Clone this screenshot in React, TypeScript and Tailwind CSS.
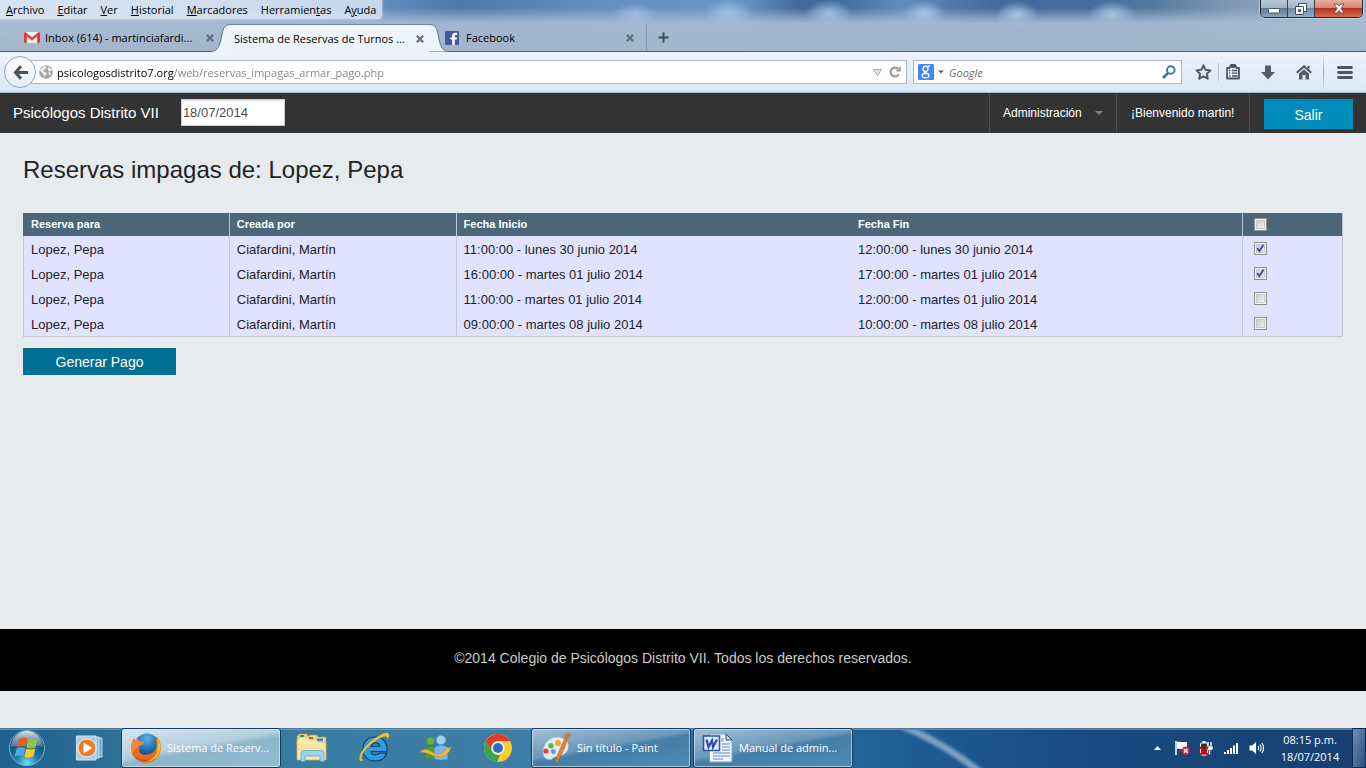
import { useState } from "react";
import type { ReactNode } from "react";

const reservations = [
  { id: 1, para: "Lopez, Pepa", por: "Ciafardini, Martín", inicio: "11:00:00 - lunes 30 junio 2014", fin: "12:00:00 - lunes 30 junio 2014", checked: true },
  { id: 2, para: "Lopez, Pepa", por: "Ciafardini, Martín", inicio: "16:00:00 - martes 01 julio 2014", fin: "17:00:00 - martes 01 julio 2014", checked: true },
  { id: 3, para: "Lopez, Pepa", por: "Ciafardini, Martín", inicio: "11:00:00 - martes 01 julio 2014", fin: "12:00:00 - martes 01 julio 2014", checked: false },
  { id: 4, para: "Lopez, Pepa", por: "Ciafardini, Martín", inicio: "09:00:00 - martes 08 julio 2014", fin: "10:00:00 - martes 08 julio 2014", checked: false },
];

const menus: [string, string, string][] = [
  ["", "A", "rchivo"],
  ["", "E", "ditar"],
  ["", "V", "er"],
  ["", "H", "istorial"],
  ["", "M", "arcadores"],
  ["Herramien", "t", "as"],
  ["A", "y", "uda"],
];

function CloseTab({ label }: { label: string }) {
  return (
    <button type="button" aria-label={label} className="shrink-0">
      <svg className="block h-2 w-2" viewBox="0 0 8 8" stroke="#5f7084" strokeWidth="2.2">
        <path d="M.8 .8 7.2 7.2M7.2 .8 .8 7.2" />
      </svg>
    </button>
  );
}

function WindowButtons() {
  return (
    <div className="mr-[3px] flex h-[18px] overflow-hidden rounded-b-[5px] border border-t-0 border-[#1e2b3c] shadow-[0_0_1px_1px_rgba(230,240,250,0.5)]">
      <button type="button" aria-label="Minimizar" className="flex w-[27px] items-center justify-center border-r border-[#31445c] bg-[linear-gradient(180deg,#b9c8d8_0%,#a3b5c8_45%,#5f7894_50%,#8ea3ba_100%)]">
        <svg className="mt-1 h-[6px] w-3" viewBox="0 0 12 6"><rect x=".5" y=".5" width="11" height="4.5" rx="1" fill="#fff" stroke="#45536a" /></svg>
      </button>
      <button type="button" aria-label="Restaurar" className="flex w-[27px] items-center justify-center border-r border-[#31445c] bg-[linear-gradient(180deg,#b9c8d8_0%,#a3b5c8_45%,#6f88a4_50%,#9aaec4_100%)]">
        <svg className="h-3 w-3" viewBox="0 0 12 12">
          <path d="M3.500 .5h8v8h-8z" fill="#fff" stroke="#45536a" />
          <path d="M.5 3.500h8v8h-8z" fill="#fff" stroke="#45536a" />
          <path d="M3.500 6.500h2v2h-2z" fill="#6f84a0" stroke="#45536a" />
        </svg>
      </button>
      <button type="button" aria-label="Cerrar" className="flex w-[47px] items-center justify-center bg-[linear-gradient(180deg,#e8aea2_0%,#d98373_45%,#b5321c_50%,#d9694a_100%)]">
        <svg className="h-[11px] w-3" viewBox="0 0 12 11">
          <path d="M1 1h3.200L6 3.200 7.800 1H11L8 5.400 11 10H7.800L6 7.600 4.200 10H1l3-4.600z" fill="#fff" stroke="#5a3a40" strokeWidth=".8" />
        </svg>
      </button>
    </div>
  );
}

function TitleArea() {
  return (
    <div className="bg-[linear-gradient(180deg,rgba(168,188,212,0)_8px,rgba(168,188,212,0.9)_23px,rgba(163,181,203,1)_51px),radial-gradient(22px_12px_at_635px_15px,#9fbce6,transparent),radial-gradient(24px_14px_at_728px_14px,#9cc4e6,transparent),radial-gradient(24px_14px_at_829px_14px,#9cc4e6,transparent),radial-gradient(22px_14px_at_924px_14px,#a5cbea,transparent),radial-gradient(22px_14px_at_1017px_15px,#a5cbe6,transparent),radial-gradient(24px_14px_at_1112px_15px,#a5cbe6,transparent),linear-gradient(90deg,#a9c6e8_0px,#93b2d6_210px,#5f8abb_390px,#4e78a8_460px,#6590bd_600px,#6a97c4_740px,#41699a_800px,#4671a1_850px,#5f8cba_900px,#44699a_1000px,#456e9d_1090px,#54799f_1150px,#8099b3_1230px,#9ab4d0_100%)]">
      <div className="flex h-5 items-start justify-between">
        <nav aria-label="Menú" className="flex h-[19px] items-center gap-[13px] rounded-br-[4px] bg-[#e0eaf5]/80 px-[6px] shadow-[0_0_3px_rgba(230,240,250,0.8)]">
          {menus.map(([before, key, after]) => (
            <button key={before + key + after} type="button" className="whitespace-nowrap">
              {before}
              <u>{key}</u>
              {after}
            </button>
          ))}
        </nav>
        <WindowButtons />
      </div>
      <div className="flex h-8 items-end border-b border-[#4b617b]">
        <div className="flex h-[27px] w-[198px] shrink-0 items-center pl-6">
          <svg className="h-[11px] w-4 shrink-0" viewBox="0 0 16 11">
            <rect width="16" height="11" rx="1" fill="#f4f0ee" />
            <path d="M0 1v9a1 1 0 0 0 1 1h1.800V4.200L8 8.400l5.200-4.200V11H15a1 1 0 0 0 1-1V1L14.800 0 8 5.500 1.200 0z" fill="#dc3a33" />
          </svg>
          <button type="button" className="ml-[5px] w-[161px] shrink-0 text-left whitespace-nowrap">Inbox (614) - martinciafardi...</button>
          <CloseTab label="Cerrar Inbox" />
        </div>
        <div className="-mb-px ml-[13px] flex h-[28px] shrink-0">
          <svg className="h-7 w-5" viewBox="0 0 20 28">
            <path d="M0 27.500C5 27.500 8 24 9.500 17L11.500 8C12.800 2.500 15 .5 20 .5V28H0z" fill="#eef4fb" />
            <path d="M0 27.500C5 27.500 8 24 9.500 17L11.500 8C12.800 2.500 15 .5 20 .5" fill="none" stroke="#5b7391" />
          </svg>
          <div className="flex w-[198px] items-center border-t border-[#6d86a4] bg-linear-to-b from-[#f3f7fc] to-[#eaf1fa]">
            <button type="button" className="w-[185px] pl-[3px] text-left whitespace-nowrap">Sistema de Reservas de Turnos ...</button>
            <CloseTab label="Cerrar Sistema de Reservas" />
          </div>
          <svg className="h-7 w-5" viewBox="0 0 20 28">
            <path d="M20 27.500C15 27.500 12 24 10.500 17L8.500 8C7.200 2.500 5 .5 0 .5V27.500z" fill="#eef4fb" transform="translate(0 0)" />
            <path d="M20 27.500C15 27.500 12 24 10.500 17L8.500 8C7.200 2.500 5 .5 0 .5" fill="none" stroke="#5b7391" />
          </svg>
        </div>
        <div className="-ml-1 flex h-[27px] w-[202px] shrink-0 items-center border-r border-[#8497ae]">
          <svg className="h-[14px] w-[14px]" viewBox="0 0 14 14">
            <rect width="14" height="14" rx="1" fill="#3f5a9d" />
            <path d="M7.200 14V8.600H5.400V6.400h1.800V5c0-2.100 1.200-3.200 3.100-3.200h1.900v2.200H11c-.9 0-1.200.4-1.200 1.200v1.200h2.300l-.3 2.200h-2V14z" fill="#fff" />
          </svg>
          <button type="button" className="ml-[7px] w-[160px] text-left">Facebook</button>
          <CloseTab label="Cerrar Facebook" />
        </div>
        <button type="button" aria-label="Nueva pestaña" className="mb-2 ml-[11px]">
          <svg className="block h-[11px] w-[11px]" viewBox="0 0 11 11" stroke="#3d4a59" strokeWidth="2"><path d="M5.500 .5v10M.5 5.500h10" /></svg>
        </button>
      </div>
    </div>
  );
}

function NavBar() {
  return (
    <div className="flex h-[41px] items-center border-b border-[#a5bdd4] bg-linear-to-b from-[#ecf3fb] to-[#dae8f6] pl-1">
      <button type="button" aria-label="Atrás" className="z-10 flex h-8 w-8 shrink-0 items-center justify-center rounded-full border border-[#8fa3ba] bg-linear-to-b from-white to-[#e3edf8]">
        <svg className="h-[15px] w-[15px]" viewBox="0 0 15 15" fill="none" stroke="#48525f" strokeWidth="3"><path d="M8 1.200 2.500 7.500 8 13.800M2.500 7.500H15" /></svg>
      </button>
      <div className="-ml-2 flex h-6 flex-1 items-center border border-[#a6bace] bg-white pr-[5px] pl-[10px]">
        <svg className="h-[14px] w-[14px] shrink-0" viewBox="0 0 14 14">
          <circle cx="7" cy="7" r="6.800" fill="#a3a3a3" />
          <path d="M4 1.500 6.500 1l1 1.500L6 4 4.500 5.500 5.500 7l2 .5L8 9l-2 1.500-.5 2L4 9 2 7 1 5zM9 2l3 1.500L13 6l-1.500-.5L10 7l2 1.500-1 2.500-1.500-2V6L8.500 4.500z" fill="#ededed" />
        </svg>
        <input aria-label="Dirección" defaultValue="psicologosdistrito7.org/web/reservas_impagas_armar_pago.php" className="ml-1 h-5 min-w-0 flex-1 bg-[linear-gradient(90deg,#000_117px,#838383_117px)] bg-clip-text text-transparent caret-black outline-none" />
        <button type="button" aria-label="Historial" className="mr-[7px]">
          <svg className="block h-[7px] w-[9px]" viewBox="0 0 9 7"><path d="M.5 .5h8l-4 6z" fill="#dde4ec" stroke="#9eabb9" /></svg>
        </button>
        <button type="button" aria-label="Recargar">
          <svg className="block h-3 w-3" viewBox="0 0 12 12"><path d="M9.800 8.200A4.400 4.400 0 1 1 8.800 2.600" fill="none" stroke="#929da9" strokeWidth="2.200" /><path d="M11.800 0v5.500H6.300z" fill="#929da9" /></svg>
        </button>
      </div>
      <div className="ml-[6px] flex h-6 w-[269px] items-center border border-[#a6bace] bg-white pr-[5px] pl-1">
        <button type="button" aria-label="Buscador" className="flex items-center gap-1">
          <svg className="h-4 w-4" viewBox="0 0 16 16">
            <rect width="16" height="16" rx="1.500" fill="#4285f4" />
            <g fill="none" stroke="#fff" strokeWidth="1.400"><ellipse cx="7.500" cy="4.800" rx="2.500" ry="2.600" /><path d="M9 2.400 11.800 2M7 7.400c-1.500 1.400.7 1.600 2 2.300" /><ellipse cx="7.600" cy="11.600" rx="3.400" ry="2.300" /></g>
          </svg>
          <svg className="h-1 w-[6px]" viewBox="0 0 6 4"><path d="M0 .5h6L3 3.500z" fill="#55606c" /></svg>
        </button>
        <input aria-label="Buscar" placeholder="Google" className="ml-[5px] h-5 min-w-0 flex-1 italic outline-none placeholder:text-[#6d6d6d]" />
        <button type="button" aria-label="Ir a buscar">
          <svg className="block h-[14px] w-[14px]" viewBox="0 0 14 14" fill="none" stroke="#3374ac"><circle cx="8.800" cy="5" r="3.800" strokeWidth="1.900" /><path d="M6 8 1 13" strokeWidth="2.600" /></svg>
        </button>
      </div>
      <button type="button" aria-label="Marcar página" className="ml-[13px]">
        <svg className="block h-4 w-[17px]" viewBox="0 0 17 16" fill="none" stroke="#4b5765" strokeWidth="1.900" strokeLinejoin="round"><path d="m8.500 1.300 2.100 4.500 4.900.6-3.600 3.400.9 4.900-4.300-2.400-4.300 2.400.9-4.900L1.500 6.400l4.900-.6z" /></svg>
      </button>
      <div className="ml-[6px] h-[18px] w-px bg-[#b3c5d8]" />
      <button type="button" aria-label="Marcadores" className="ml-[7px]">
        <svg className="block h-4 w-[14px]" viewBox="0 0 14 16"><path d="M1 4h2.500L5 1h4l1.500 3H13v10.500H1z" fill="none" stroke="#4b5765" strokeWidth="1.800" strokeLinejoin="round" /><path d="M4.500 4 5.500 1.500h3l1 2.500z" fill="#4b5765" /><path d="M3 6.500h1.500M6 6.500h5.500M3 9.200h1.500M6 9.200h5.500M3 12h1.500M6 12h5.500" stroke="#4b5765" strokeWidth="1.300" /></svg>
      </button>
      <button type="button" aria-label="Descargas" className="ml-[21px]">
        <svg className="block h-[15px] w-[14px]" viewBox="0 0 14 15"><path d="M4 .5h6V7h4l-7 7.500L0 7h4z" fill="#525e6c" /></svg>
      </button>
      <button type="button" aria-label="Inicio" className="ml-[21px]">
        <svg className="block h-[15px] w-4" viewBox="0 0 16 15"><path d="M.8 7.800 8 1.200l7.200 6.600" fill="none" stroke="#4b5765" strokeWidth="1.900" /><path d="M8 4.200 13 8.800V14.500H9.500V10h-3v4.500H3V8.800z" fill="#525e6c" /><path d="M11.500 1h2v3.500l-2-1.800z" fill="#4b5765" /></svg>
      </button>
      <div className="ml-[11px] h-9 w-px bg-linear-to-b from-transparent via-[#8fa3ba] to-transparent" />
      <button type="button" aria-label="Abrir menú" className="mr-[13px] ml-[13px]">
        <svg className="block h-[13px] w-4" viewBox="0 0 16 13" stroke="#4b5765" strokeWidth="2.800" strokeLinecap="round"><path d="M1.500 1.500h13M1.500 6.500h13M1.500 11.500h13" /></svg>
      </button>
    </div>
  );
}

function SiteHeader() {
  return (
    <header className="flex h-10 items-stretch bg-[#333333] text-[12px] text-white">
      <a href="#" className="ml-[13px] self-center text-[15px]">Psicólogos Distrito VII</a>
      <input aria-label="Fecha" defaultValue="18/07/2014" className="mt-[6px] ml-[22px] h-[27px] w-[104px] border border-[#cccccc] bg-white px-px text-[13px] text-[#4d4d4d] shadow-[inset_0_1px_2px_rgba(0,0,0,0.1)] outline-none" />
      <button type="button" className="ml-auto flex w-[127px] items-center justify-between border-l border-[#4d4d4d] pr-[13px] pl-[13px]">
        Administración
        <svg className="h-1 w-2" viewBox="0 0 8 4"><path d="M0 0h8L4 4z" fill="#848484" /></svg>
      </button>
      <span className="flex w-[133px] items-center border-l border-[#4d4d4d] pl-[14px]">¡Bienvenido martin!</span>
      <div className="border-l border-[#4d4d4d] pt-[6px] pr-[13px] pl-[14px]">
        <button type="button" className="block h-[30px] w-[89px] bg-[#008cba] pt-[2px] text-[14px]">Salir</button>
      </div>
    </header>
  );
}

function Tick({ label, checked, onChange }: { label: string; checked: boolean; onChange: () => void }) {
  return (
    <span className="grid w-[13px]">
      <input type="checkbox" aria-label={label} checked={checked} onChange={onChange} className="col-start-1 row-start-1 h-[13px] w-[13px] appearance-none border border-[#8e8f8f] bg-linear-to-br from-[#c3c6ce] to-[#f7f7f7] shadow-[inset_0_0_0_1px_#f4f4f4,inset_0_0_0_2px_#c5c8ce]" />
      {checked && (
        <svg className="pointer-events-none col-start-1 row-start-1 h-[13px] w-[13px]" viewBox="0 0 13 13" fill="none" stroke="#3f5798" strokeWidth="2"><path d="M3.300 6.200 5.400 9 9.500 2.800" /></svg>
      )}
    </span>
  );
}

function ReservationsPage() {
  const [checked, setChecked] = useState<boolean[]>(reservations.map((r) => r.checked));
  const all = checked.every(Boolean);
  return (
    <main className="flex-1 px-[23px] pt-[23px] text-[#222222]">
      <h1 className="text-[24px] leading-7">Reservas impagas de: Lopez, Pepa</h1>
      <table className="mt-[29px] w-full table-fixed border-separate border-spacing-0 border-r border-b border-[#bfc8d4] bg-[#e1e2ff] text-left text-[13px]">
        <colgroup>
          <col className="w-[15.6%]" />
          <col className="w-[17.2%]" />
          <col className="w-[29.9%]" />
          <col className="w-[29.7%]" />
          <col className="w-[7.6%]" />
        </colgroup>
        <thead>
          <tr className="h-[23px] bg-[#4c667a] text-[11px] text-white">
            <th className="border-l border-[#4c667a] px-[7px]">Reserva para</th>
            <th className="border-l border-[#bfc8d4] px-[7px]">Creada por</th>
            <th className="border-l border-[#bfc8d4] px-[7px]">Fecha Inicio</th>
            <th className="px-2">Fecha Fin</th>
            <th className="border-l border-[#bfc8d4] px-[11px]">
              <Tick label="Seleccionar todas" checked={all} onChange={() => setChecked(checked.map(() => !all))} />
            </th>
          </tr>
        </thead>
        <tbody>
          {reservations.map((r, i) => (
            <tr key={r.id} className="h-[25px]">
              <td className="border-l border-[#bfc8d4] px-[7px] pt-[2px]">{r.para}</td>
              <td className="border-l border-[#bfc8d4] px-[7px] pt-[2px]">{r.por}</td>
              <td className="border-l border-[#bfc8d4] px-[7px] pt-[2px]">{r.inicio}</td>
              <td className="px-2 pt-[2px]">{r.fin}</td>
              <td className="border-l border-[#bfc8d4] px-[11px]">
                <Tick label={`Seleccionar reserva ${r.id}`} checked={checked[i]} onChange={() => setChecked(checked.map((c, j) => (j === i ? !c : c)))} />
              </td>
            </tr>
          ))}
        </tbody>
      </table>
      <button type="button" className="mt-[11px] h-[27px] w-[153px] bg-[#007095] pt-[2px] text-[14px] text-white">Generar Pago</button>
    </main>
  );
}

function TaskButton({ label, active, children }: { label: string; active?: boolean; children: ReactNode }) {
  const look = active
    ? "bg-[linear-gradient(170deg,#d6e5ee_0%,#b3cfde_45%,#8db5ca_55%,#8fbdd2_100%)]"
    : "bg-[linear-gradient(170deg,#a3c0d6_0%,#6a98b9_45%,#447fa9_52%,#4d8ab0_100%)]";
  return (
    <button type="button" className={`flex h-10 w-40 shrink-0 items-center gap-[5px] rounded-[3px] border border-[#163c5c] pl-2 text-white shadow-[inset_0_0_0_1px_rgba(220,238,248,0.65)] ${look}`}>
      {children}
      <span className="whitespace-nowrap">{label}</span>
    </button>
  );
}

function Pinned({ label, children }: { label: string; children: ReactNode }) {
  return (
    <button type="button" aria-label={label} className="flex h-10 w-[62px] shrink-0 items-center justify-center">
      {children}
    </button>
  );
}

function StartOrb() {
  return (
    <svg className="h-[38px] w-[38px]" viewBox="0 0 38 38">
      <defs>
        <radialGradient id="orb" cx=".5" cy=".95" r=".8">
          <stop offset="0" stopColor="#6fe0f5" /><stop offset=".4" stopColor="#1f7fb0" /><stop offset="1" stopColor="#103a62" />
        </radialGradient>
        <linearGradient id="orbShine" x2="0" y2="1"><stop offset="0" stopColor="#d9e7f0" /><stop offset="1" stopColor="#7b9fba" stopOpacity=".5" /></linearGradient>
      </defs>
      <circle cx="19" cy="19" r="17.500" fill="url(#orb)" stroke="#7fb4cf" />
      <path d="M3 18a16 16 0 0 1 32 0c-8-2-22-2-32 0z" fill="url(#orbShine)" />
      <path d="M11 10c3-2 5.500-2 8.500-.6l-2 8.600c-3-1.400-5.400-1.400-8.600.3z" fill="#ee5a26" />
      <path d="M20.500 9.900c3 1.400 6 1.400 9.300-.3l-2.200 8.700c-3 1.600-5.900 1.500-9.100.2z" fill="#91c640" />
      <path d="M8.600 19.500c3-1.600 5.500-1.600 8.700-.3l-2 8.300c-3-1.300-5.700-1.300-8.700.2z" fill="#4fa9e4" />
      <path d="M18.300 19.600c3 1.300 5.900 1.300 9.100-.2l-2 8.200c-3 1.500-5.900 1.500-9 .2z" fill="#fdc62c" />
    </svg>
  );
}

function FirefoxIcon() {
  return (
    <svg className="h-8 w-8 shrink-0" viewBox="0 0 32 32">
      <defs><radialGradient id="ffBlue" cx=".5" cy=".2" r=".8"><stop offset="0" stopColor="#58b8e8" /><stop offset=".6" stopColor="#1c64a8" /><stop offset="1" stopColor="#143a70" /></radialGradient></defs>
      <circle cx="17" cy="14.500" r="13" fill="url(#ffBlue)" />
      <path d="M26 4.500c4 3.500 5.500 8 4.600 13.500C29.500 26 23 31 16 31 8.500 31 2.500 26 1.500 19 .8 14 1.600 9.500 4 6l1 3c1-1.300 2-2 3.500-2.400L8.700 9c2 .2 3.800.2 5 1.200-.3 2-2.500 2.600-4 3.600.5 2.700-1 3.600-.3 5.600 1.400 3.200 5 4 8.600 2.800 4.500-.8 8.500-3.600 8.600-8.800.1-3.400-.4-6-1.600-7.400z" fill="#e66a1f" />
      <path d="M27 6c3.500 4 4.300 9 2.600 14-1.800 5.500-7 9.500-13 9.700 6-2 10-6 10.600-12 .4-4.500.6-8-.2-11.700z" fill="#fbc321" />
      <path d="M4 6l1 3c1-1.300 2-2 3.500-2.400L8.700 9c2 .2 3.800.2 5 1.200-.3 2-2.500 2.600-4 3.600-3 1-6 5-7.700 8C.8 15.500 1.600 9.500 4 6z" fill="#ef8a35" />
      <path d="M5 23c3.500 4.500 9 6 15 3.800C16 31 8.500 29.500 5 23z" fill="#c8421c" />
    </svg>
  );
}

function WordIcon() {
  return (
    <svg className="h-[30px] w-8 shrink-0" viewBox="0 0 32 30">
      <path d="M7.500 1H24l6 6v22H7.500z" fill="#f5f9ff" stroke="#7e9ad6" />
      <path d="M24 1v6h6z" fill="#c9d8f2" stroke="#29477f" />
      <path d="M20 11h8M20 14h8M20 17h8M11 20h17M11 23h17M11 26h10" stroke="#88a6e0" strokeWidth="1.400" />
      <path d="M19 5h3v4h-3z" fill="#a9c1e8" />
      <rect x="1.500" y="3" width="16" height="14.500" fill="#e3edff" stroke="#2b55b8" strokeWidth="1.600" />
      <path d="M4.500 6.500 6.500 14 10 7.500 11 14l4-7.500" fill="none" stroke="#2a50ad" strokeWidth="2.300" />
    </svg>
  );
}

function PaintIcon() {
  return (
    <svg className="h-8 w-8 shrink-0" viewBox="0 0 32 32">
      <path d="M17 5c7 0 11.500 4 11.500 9 0 7-6 10-11 10.500-3 .3-4 1-5.500 2.500-3 2-6.500 0-8-2.500C.5 17.500 6 5 17 5zM13 17a2.500 2.500 0 1 0 2 4.500A2.700 2.700 0 0 0 13 17z" fill="#deedf6" stroke="#8eb6cf" strokeWidth=".7" fillRule="evenodd" />
      <circle cx="6" cy="19" r="2.600" fill="#ea4335" /><circle cx="11" cy="13.800" r="2.700" fill="#5bb848" /><circle cx="18" cy="11" r="2.900" fill="#f6a623" />
      <path d="M27 8c-2 8-5 15-11 23.500l-1-1C17.500 22 21 14.500 24.500 7z" fill="#e98231" stroke="#a94f18" strokeWidth=".5" />
      <path d="M24 7.500c-.6-3 -1-4.500 2-6 3-1 4.500 0 6 1.500-1.500 1-2 2.500-4.500 5.500z" fill="#b98250" />
    </svg>
  );
}

function Taskbar() {
  return (
    <div className="flex h-10 items-center bg-[linear-gradient(180deg,#1f3d5a_0px,#8cb5d0_1px,transparent_2px),linear-gradient(90deg,#20608f_0px,#2f7197_120px,#3a7da4_320px,#3d7da6_520px,#23639a_860px,#1a528a_1000px,#184a7f_1120px,#173f70_100%)] text-white">
      <button type="button" aria-label="Inicio de Windows" className="flex w-[58px] shrink-0 items-center pl-2"><StartOrb /></button>
      <Pinned label="Reproductor de Windows Media">
        <svg className="h-[26px] w-[27px]" viewBox="0 0 27 26">
          <path d="M17 3h9v19h-9z" fill="#6fa9d1" stroke="#b9d9ec" /><path d="M12 2h11v21H12z" fill="#8fc0e0" stroke="#c8e2f1" /><path d="M.5 1H20v24H.5z" fill="#a9cfe6" stroke="#d5e9f4" />
          <circle cx="11" cy="13" r="9" fill="#ee7d22" stroke="#fff" strokeWidth=".8" /><path d="M7.500 7.500v11l9-5.500z" fill="#fff" />
        </svg>
      </Pinned>
      <div className="ml-px flex"><TaskButton label="Sistema de Reserv..." active><FirefoxIcon /></TaskButton></div>
      <Pinned label="Explorador de Windows">
        <svg className="h-[30px] w-8" viewBox="0 0 32 30">
          <path d="M1 3h1l1-2h8l1 2h1l1-1h7l1 2h8v9H1z" fill="#f2d98a" stroke="#bd9440" strokeWidth=".7" />
          <path d="M21 5.500h6v2.500h-6z" fill="#2f86d6" />
          <path d="M3 4h10l2 2h5l2 3h8v18H1V8z" fill="#fae9a9" stroke="#d2ab52" strokeWidth=".8" />
          <path d="M4 2h4v2H4z" fill="#28a745" /><path d="M13 4h4v2h-4z" fill="#d9453b" />
          <path d="M2 12h28M2 16h28" stroke="#efd88c" />
          <path d="M5 28.500V20q0-2.500 3-2.500h17q3 0 3 2.500v8.500h-4V23H9v5.500z" fill="#9dd3ec" stroke="#5fa3c9" strokeWidth=".8" />
        </svg>
      </Pinned>
      <Pinned label="Internet Explorer">
        <svg className="h-8 w-8" viewBox="0 0 32 32" fill="none">
          <path fillRule="evenodd" d="M29 19.500H13c.3 2 2 3.300 4.400 3.300 2 0 3.400-.6 4.200-1.600h7C26.800 26 22.500 29 17 29 10 29 4.800 24 4.800 17S10 5 17 5c8 0 12.800 5.500 12 14.500zM13 14.500h8.800c-.3-2.300-2-3.600-4.400-3.600S13.400 12.200 13 14.500z" fill="#2f9be0" stroke="#0c3f78" strokeWidth="1.200" />
          <path d="M6 28C-2 33 .5 20 11 11 19 4 28-1 30.500 1.500c1.300 1.300.5 3.600-.8 6 0-3.500-2.300-3.800-7-1.500C14 10 5 19 3.500 25c-.5 2.400.5 3 2.500 3z" fill="#f3c340" stroke="#b98a1d" strokeWidth=".4" />
        </svg>
      </Pinned>
      <Pinned label="Windows Live Messenger">
        <svg className="h-[26px] w-8" viewBox="0 0 32 26">
          <circle cx="10.500" cy="6" r="4" fill="#67b445" stroke="#3b8430" strokeWidth=".6" /><path d="M5 23V15q0-4 5.500-4t5.500 4v8q-5.500 2-11 0z" fill="#4b9d38" stroke="#3b8430" strokeWidth=".6" />
          <circle cx="21" cy="5" r="4.700" fill="#a2cff0" stroke="#5b98cf" strokeWidth=".6" /><path d="M14.500 24V15q0-4.500 6.500-4.500t6.500 4.500v9q-6.500 2-13 0z" fill="#7db6e4" stroke="#5b98cf" strokeWidth=".6" />
          <path d="M0 17c3-3.500 8-3 12 0s10 4 15-5l1.500 1 3-1c-4 11-13 11-20 8-4-2-8-3-11.500-3z" fill="#edb550" stroke="#c28526" strokeWidth=".5" />
        </svg>
      </Pinned>
      <Pinned label="Google Chrome">
        <svg className="h-7 w-7" viewBox="0 0 28 28">
          <circle cx="14" cy="14" r="14" fill="#fccb2d" />
          <path d="M1.900 7A14 14 0 0 1 26.100 7H14a7 7 0 0 0-6 10.500z" fill="#de3a2c" />
          <path d="M1.900 7 8 17.500A7 7 0 0 0 14 21a7 7 0 0 0 2-.3L13 28A14 14 0 0 1 1.900 7z" fill="#36a553" />
          <circle cx="14" cy="14" r="6.500" fill="#f3f3f3" /><circle cx="14" cy="14" r="5" fill="#2b6fc4" />
        </svg>
      </Pinned>
      <div className="ml-[2px] flex gap-[2px]">
        <TaskButton label="Sin título - Paint"><PaintIcon /></TaskButton>
        <TaskButton label="Manual de admin..."><WordIcon /></TaskButton>
      </div>
      <svg className="h-[38px] w-[150px] self-end" viewBox="0 0 150 38"><defs><filter id="soft"><feGaussianBlur stdDeviation="1.500" /></filter></defs><path d="M38 -8Q85 8 132 46" fill="none" stroke="#b9d0e6" strokeOpacity=".6" strokeWidth="7" filter="url(#soft)" /></svg>
      <div className="ml-auto flex shrink-0 items-center">
        <button type="button" aria-label="Mostrar iconos ocultos" className="mr-[14px]">
          <svg className="block h-1 w-[7px]" viewBox="0 0 7 4"><path d="M3.500 0 7 4H0z" fill="#fff" /></svg>
        </button>
        <svg className="mr-[9px] h-[14px] w-[15px]" viewBox="0 0 15 14"><path d="M1 0v14" stroke="#fff" strokeWidth="1.500" /><path d="M2 1c3-1 4 1 7 0h3v7H8C6 8.500 5 7 2 8z" fill="#fff" /><circle cx="10.800" cy="9.800" r="4.200" fill="#d9262a" /><path d="m9 8 3.600 3.600M12.600 8 9 11.600" stroke="#fff" strokeWidth="1.500" /></svg>
        <svg className="mr-[10px] h-[15px] w-[15px]" viewBox="0 0 15 15"><rect x="1.500" y="2" width="7" height="12" rx="1" fill="#333" stroke="#fff" /><path d="M3.500 1h3" stroke="#fff" strokeWidth="2" /><path d="M7 5h7v2.500q0 2-3.500 2Q7 9.500 7 7.500z" fill="#fff" stroke="#222" strokeWidth=".6" /><path d="M9 5V1M12 5V1M10.500 9.500v4" stroke="#fff" strokeWidth="1.400" /><path d="m1 6 8 8M9 6l-8 8" stroke="#e2000f" strokeWidth="2.300" /></svg>
        <svg className="mr-[10px] h-[11px] w-[15px]" viewBox="0 0 15 11" fill="#fff"><path d="M0 9h2v2H0zM3 7h2v4H3zM6 5h2v6H6zM9 2.500h2V11H9zM12 0h2v11h-2z" /></svg>
        <svg className="mr-[16px] h-[14px] w-[15px]" viewBox="0 0 15 14"><path d="M.5 4.500h2.700L7 1v12L3.200 9.500H.5z" fill="#fff" /><path d="M9 5q1.200 2 0 4M11 3.500q2.200 3.500 0 7M13 2q3 5 0 10" fill="none" stroke="#fff" strokeWidth="1.100" /></svg>
        <div className="w-[60px] text-center leading-[17px]">
          <div>08:15 p.m.</div>
          <div>18/07/2014</div>
        </div>
        <button type="button" aria-label="Mostrar escritorio" className="ml-3 h-10 w-[14px] border border-[#0f2c50] bg-linear-to-br from-[#6d90b5] to-[#254f80]" />
      </div>
    </div>
  );
}

export default function App() {
  return (
    <div className="flex min-h-screen flex-col bg-[#e7ebee] font-['Liberation_Sans',Arial,sans-serif]">
      <div className="font-['Open_Sans','Noto_Sans',sans-serif] text-[11px] leading-4 text-black">
        <TitleArea />
        <NavBar />
      </div>
      <SiteHeader />
      <ReservationsPage />
      <footer className="mb-[37px] bg-black pt-[18px] pb-[22px] text-center text-[14px] leading-[22px] text-[#cccccc]">©2014 Colegio de Psicólogos Distrito VII. Todos los derechos reservados.</footer>
      <div className="font-['Open_Sans','Noto_Sans',sans-serif] text-[11px] leading-4">
        <Taskbar />
      </div>
    </div>
  );
}
